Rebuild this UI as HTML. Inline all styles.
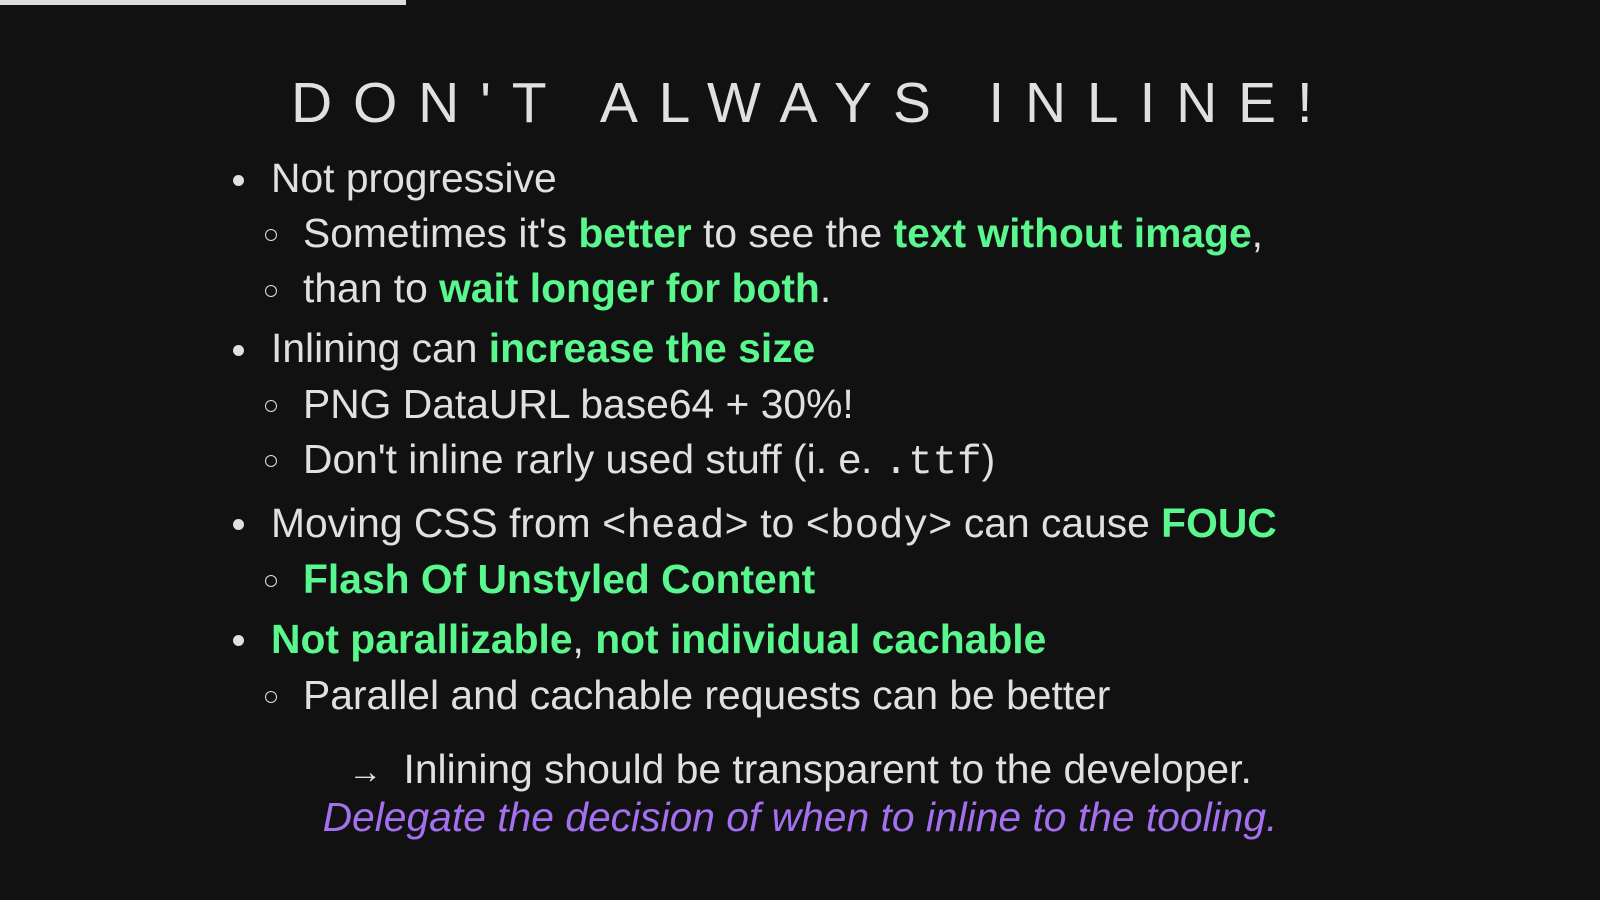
<!DOCTYPE html>
<html><head><meta charset="utf-8"><style>
html,body{margin:0;padding:0;background:#111;width:1600px;height:900px;overflow:hidden}
body{font-family:"Liberation Sans",sans-serif;color:#e0e0e0;position:relative}
.bar{position:absolute;left:0;top:0;width:406px;height:5px;background:#ddd}
.t{position:absolute;white-space:nowrap;line-height:1}
.title{font-size:57px;letter-spacing:0.365em;left:291px;top:75px}
.l{font-size:40.8px}
.g{color:#5af78e;font-weight:bold}
.m{font-family:"Liberation Mono",monospace}
.dot{position:absolute;width:11px;height:11px;border-radius:50%;background:#e0e0e0}
.circ{position:absolute;border-radius:50%;border:1.6px solid #e0e0e0;box-sizing:border-box;width:12px;height:12px}
.p{color:#a570f0;font-style:italic}
</style>
</head><body>
<div class="bar"></div>
<div class="t title">DON'T ALWAYS INLINE!</div>

<div class="dot" style="left:233px;top:175px"></div>
<div class="t l" style="left:271px;top:158px">Not progressive</div>

<div class="circ" style="left:265px;top:229px"></div>
<div class="t l" style="left:303px;top:213px">Sometimes it's <span class="g">better</span> to see the <span class="g">text without image</span>,</div>

<div class="circ" style="left:265px;top:285px"></div>
<div class="t l" style="left:303px;top:268px">than to <span class="g">wait longer for both</span>.</div>

<div class="dot" style="left:233px;top:345px"></div>
<div class="t l" style="left:271px;top:328px">Inlining can <span class="g">increase the size</span></div>

<div class="circ" style="left:265px;top:400px"></div>
<div class="t l" style="left:303px;top:384px">PNG DataURL base64 + 30%!</div>

<div class="circ" style="left:265px;top:455px"></div>
<div class="t l" style="left:303px;top:439px">Don't inline rarly used stuff (i. e. <span class="m">.ttf</span>)</div>

<div class="dot" style="left:233px;top:519px"></div>
<div class="t l" style="left:271px;top:503px">Moving CSS from <span class="m">&lt;head&gt;</span> to <span class="m">&lt;body&gt;</span> can cause <span class="g">FOUC</span></div>

<div class="circ" style="left:265px;top:575px"></div>
<div class="t l" style="left:303px;top:559px"><span class="g">Flash Of Unstyled Content</span></div>

<div class="dot" style="left:233px;top:635px"></div>
<div class="t l" style="left:271px;top:619px"><span class="g">Not parallizable</span>, <span class="g">not individual cachable</span></div>

<div class="circ" style="left:265px;top:691px"></div>
<div class="t l" style="left:303px;top:675px">Parallel and cachable requests can be better</div>

<div class="t l" style="left:0;width:1600px;text-align:center;top:749px"><span style="font-size:34px;margin-right:10px">→</span> Inlining should be transparent to the developer.</div>
<div class="t l p" style="left:0;width:1600px;text-align:center;top:797px">Delegate the decision of when to inline to the tooling.</div>
</body></html>
